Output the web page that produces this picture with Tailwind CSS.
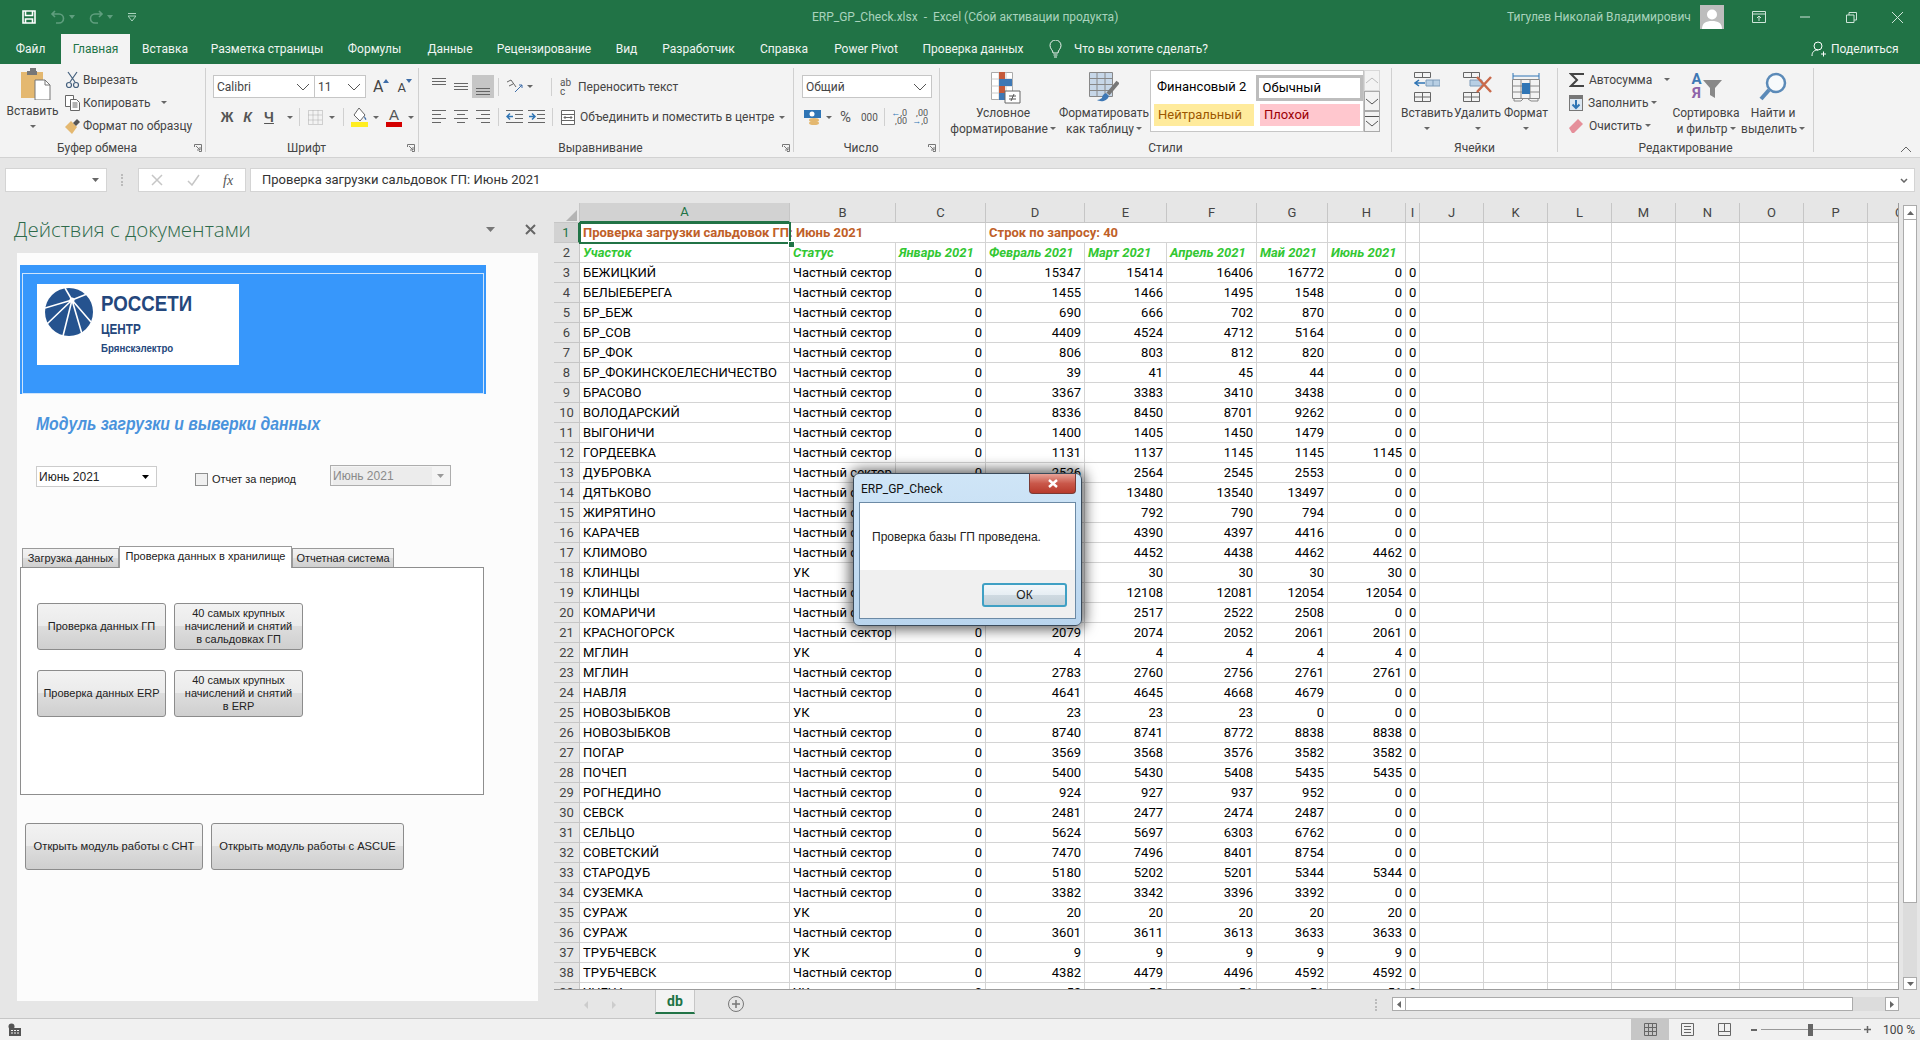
<!DOCTYPE html>
<html lang="ru">
<head>
  <meta charset="UTF-8" />
  <title>ERP_GP_Check.xlsx - Excel</title>
  <script src="https://cdn.jsdelivr.net/npm/@tailwindcss/browser@4"></script>
</head>

<body class="relative w-[1920px] h-[1040px] overflow-hidden bg-[#e6e6e6] text-[#444] font-['Roboto',sans-serif] text-[12px]">

  <!-- Title bar -->
  <header class="flex items-center h-[34px] bg-[#217346] text-[#a9d3bd]">
    <svg class="ml-[22px] w-[14px] h-[14px]" viewBox="0 0 14 14" fill="none" stroke="#fff" stroke-width="1.6"><path d="M1 1h12v12H1z"/><path d="M3.5 1v4.5h7V1M3.5 13V9h7v4"/></svg>
    <svg class="ml-[14px] w-[16px] h-[14px]" viewBox="0 0 16 14" fill="none" stroke="#5f9e7e" stroke-width="1.6"><path d="M5 1 2 4l3 3M2 4h7a4 4 0 0 1 0 9H6"/></svg>
    <svg class="ml-[3px] w-[6px] h-[4px]" viewBox="0 0 6 4" fill="#5f9e7e"><path d="M0 0h6L3 4z"/></svg>
    <svg class="ml-[13px] w-[16px] h-[14px]" viewBox="0 0 16 14" fill="none" stroke="#5f9e7e" stroke-width="1.6"><path d="m11 1 3 3-3 3M14 4H7a4 4 0 0 0 0 9h3"/></svg>
    <svg class="ml-[3px] w-[6px] h-[4px]" viewBox="0 0 6 4" fill="#5f9e7e"><path d="M0 0h6L3 4z"/></svg>
    <svg class="ml-[15px] w-[8px] h-[8px]" viewBox="0 0 8 8" fill="none" stroke="#a9d3bd"><path d="M0 .5h8"/><path d="M0 3h8L4 8z" fill="#217346"/></svg>
    <div class="ml-[676px] w-[295px] whitespace-pre">ERP_GP_Check.xlsx  -  Excel (Сбой активации продукта)</div>
    <div class="ml-[400px] w-[181px] text-right whitespace-nowrap">Тигулев Николай Владимирович</div>
    <div class="ml-[12px] w-[24px] h-[24px] bg-[#bdbdbd] flex items-end justify-center overflow-hidden">
      <svg class="w-[20px] h-[22px]" viewBox="0 0 20 22" fill="#fff"><circle cx="10" cy="7.5" r="5"/><path d="M0 22c0-6 4-8 10-8s10 2 10 8z"/></svg>
    </div>
    <svg class="ml-[28px] w-[14px] h-[12px]" viewBox="0 0 14 12" fill="none" stroke="#cfe5d9"><path d="M.5.500h13v11H.5zM.5 3h13M7 10V5M5 7l2-2 2 2"/></svg>
    <svg class="ml-[34px] w-[10px] h-[2px]" viewBox="0 0 10 2" fill="none" stroke="#cfe5d9"><path d="M0 1h10"/></svg>
    <svg class="ml-[36px] w-[11px] h-[11px]" viewBox="0 0 11 11" fill="none" stroke="#cfe5d9"><path d="M.5 3h7.500v7.500H.5zM3 3V.5h7.500V8H8"/></svg>
    <svg class="ml-[35px] w-[11px] h-[11px]" viewBox="0 0 11 11" fill="none" stroke="#cfe5d9"><path d="m0 0 11 11M11 0 0 11"/></svg>
  </header>

  <!-- Ribbon tabs -->
  <nav class="flex items-end h-[30px] bg-[#217346] text-[#f0f5f2] text-center whitespace-nowrap">
    <div class="w-[61px] h-[30px] leading-[30px]">Файл</div>
    <div class="w-[69px] h-[30px] leading-[30px] bg-[#f3f3f3] text-[#217346]">Главная</div>
    <div class="w-[70px] h-[30px] leading-[30px]">Вставка</div>
    <div class="w-[134px] h-[30px] leading-[30px]">Разметка страницы</div>
    <div class="w-[81px] h-[30px] leading-[30px]">Формулы</div>
    <div class="w-[70px] h-[30px] leading-[30px]">Данные</div>
    <div class="w-[118px] h-[30px] leading-[30px]">Рецензирование</div>
    <div class="w-[47px] h-[30px] leading-[30px]">Вид</div>
    <div class="w-[97px] h-[30px] leading-[30px]">Разработчик</div>
    <div class="w-[74px] h-[30px] leading-[30px]">Справка</div>
    <div class="w-[90px] h-[30px] leading-[30px]">Power Pivot</div>
    <div class="w-[124px] h-[30px] leading-[30px]">Проверка данных</div>
    <div class="flex items-center h-[30px] ml-[14px]">
      <svg class="w-[13px] h-[18px]" viewBox="0 0 13 18" fill="none" stroke="#f0f5f2"><path d="M4 13c0-3-3-4-3-7.500a5.500 5.500 0 0 1 11 0C12 9 9 10 9 13zM4.500 15h4M5 17h3"/></svg>
      <span class="ml-[12px] w-[737px] text-left">Что вы хотите сделать?</span>
      <svg class="w-[15px] h-[16px]" viewBox="0 0 15 16" fill="none" stroke="#fff"><circle cx="7" cy="5" r="4"/><path d="M1 15c0-4 2-6 6-6M10 13h5M12.500 10.500v5"/></svg>
      <span class="ml-[5px]">Поделиться</span>
    </div>
  </nav>

  <!-- Ribbon -->
  <section class="flex items-start h-[94px] pt-[4px] bg-[#f3f3f3] border-b border-[#d2d2d2] whitespace-nowrap">

    <!-- Буфер обмена -->
    <div class="shrink-0 w-[206px] h-[84px] border-r border-[#d0d0d0]">
      <div class="flex h-[72px]">
        <div class="w-[65px] flex flex-col items-center">
          <svg class="ml-[6px] w-[30px] h-[32px]" viewBox="0 0 30 32"><path d="M0 4h22v26H0z" fill="#e4b870"/><path d="M7 3h8v-3H9v3H6v4h10V3z" fill="#777"/><path d="M14 12h10l5 5v15H14z" fill="#fff" stroke="#777"/><path d="M24 12v5h5" fill="none" stroke="#777"/></svg>
          <span class="mt-[3px] leading-[16px]">Вставить</span>
          <svg class="mt-[6px] w-[6px] h-[3px]" viewBox="0 0 6 3" fill="#666"><path d="M0 0h6L3 3z"/></svg>
        </div>
        <div class="flex flex-col">
          <div class="flex items-center h-[23px]"><svg class="w-[15px] h-[18px]" viewBox="0 0 15 18" fill="none" stroke="#44607e" stroke-width="1.200"><path d="m3 1 7 10M12 1 5 11"/><circle cx="4" cy="14" r="2.500"/><circle cx="11" cy="14" r="2.500"/></svg><span class="ml-[3px]">Вырезать</span></div>
          <div class="flex items-center h-[23px]"><svg class="w-[15px] h-[16px]" viewBox="0 0 15 16" fill="#fff" stroke="#666"><path d="M.5.500h8v11h-8z"/><path d="M5.500 4.500h6l3 3v8h-9zM7.500 8h5M7.500 10h5M7.500 12h5"/></svg><span class="ml-[3px]">Копировать</span><svg class="ml-[11px] w-[6px] h-[3px]" viewBox="0 0 6 3" fill="#666"><path d="M0 0h6L3 3z"/></svg></div>
          <div class="flex items-center h-[23px]"><svg class="w-[15px] h-[16px]" viewBox="0 0 15 16"><path d="M0 9 6 3l6 6-5 7z" fill="#e4b870"/><path d="m8 5 4-4 3 3-4 4z" fill="#555"/></svg><span class="ml-[3px]">Формат по образцу</span></div>
        </div>
      </div>
      <div class="flex items-center h-[16px] text-[#444]">
        <span class="flex-1 text-center">Буфер обмена</span>
        <svg class="w-[8px] h-[8px] mr-[3px] shrink-0" viewBox="0 0 8 8" fill="none" stroke="#777"><path d="M.5 3V.5h7v7H5M2 2l4 4M6 3v3H3"/></svg>
      </div>
    </div>

    <!-- Шрифт -->
    <div class="shrink-0 w-[213px] h-[84px] border-r border-[#d0d0d0]">
      <div class="h-[72px] pl-[7px] pt-[7px]">
        <div class="flex items-center h-[23px]">
          <div class="flex items-center justify-between w-[102px] h-[23px] pl-[3px] pr-[4px] bg-white border border-[#c6c6c6]">Calibri<svg class="w-[14px] h-[8px]" viewBox="0 0 14 8" fill="none" stroke="#555"><path d="m1 1 6 6 6-6"/></svg></div>
          <div class="flex items-center justify-between w-[51px] h-[23px] pl-[3px] pr-[4px] bg-white border border-l-0 border-[#c6c6c6]">11<svg class="w-[14px] h-[8px]" viewBox="0 0 14 8" fill="none" stroke="#555"><path d="m1 1 6 6 6-6"/></svg></div>
          <span class="ml-[7px] text-[16px] leading-none">A</span><svg class="w-[6px] h-[4px] mb-[12px]" viewBox="0 0 6 4" fill="#3e6da8"><path d="M0 4h6L3 0z"/></svg>
          <span class="ml-[8px] text-[13px] leading-none mt-[2px]">A</span><svg class="w-[6px] h-[4px] mb-[12px]" viewBox="0 0 6 4" fill="#3e6da8"><path d="M0 0h6L3 4z"/></svg>
        </div>
        <div class="flex items-center h-[20px] mt-[9px] pl-[4px] font-['Liberation_Sans',sans-serif] font-bold text-[14px] text-[#555]">
          <span class="w-[20px] text-center">Ж</span>
          <span class="w-[21px] text-center italic">К</span>
          <span class="w-[22px] text-center underline">Ч</span>
          <svg class="ml-[7px] w-[6px] h-[3px]" viewBox="0 0 6 3" fill="#666"><path d="M0 0h6L3 3z"/></svg>
          <span class="ml-[6px] w-px h-[18px] bg-[#d0d0d0]"></span>
          <svg class="ml-[8px] w-[15px] h-[15px]" viewBox="0 0 15 15" fill="none" stroke="#aaa" stroke-dasharray="1 1"><path d="M.5.500h14v14H.5zM.5 5h14M.5 10h14M5 .5v14M10 .5v14"/></svg>
          <svg class="ml-[6px] w-[6px] h-[3px]" viewBox="0 0 6 3" fill="#666"><path d="M0 0h6L3 3z"/></svg>
          <span class="ml-[8px] w-px h-[18px] bg-[#d0d0d0]"></span>
          <svg class="ml-[7px] w-[17px] h-[20px]" viewBox="0 0 17 20"><path d="m8 1 6 7-5 6-6-6z" fill="#fff" stroke="#666"/><path d="M13 9c2 2 3 3 2 4-1 0-2-2-2-4z" fill="#3e6da8"/><path d="M0 15h17v5H0z" fill="#ffed20"/></svg>
          <svg class="ml-[5px] w-[6px] h-[3px]" viewBox="0 0 6 3" fill="#666"><path d="M0 0h6L3 3z"/></svg>
          <div class="ml-[7px] w-[16px] flex flex-col items-center"><span class="text-[15px] leading-[15px] font-normal text-[#555]">A</span><span class="w-[16px] h-[5px] bg-[#d40000]"></span></div>
          <svg class="ml-[6px] w-[6px] h-[3px]" viewBox="0 0 6 3" fill="#666"><path d="M0 0h6L3 3z"/></svg>
        </div>
      </div>
      <div class="flex items-center h-[16px]">
        <span class="flex-1 text-center">Шрифт</span>
        <svg class="w-[8px] h-[8px] mr-[3px] shrink-0" viewBox="0 0 8 8" fill="none" stroke="#777"><path d="M.5 3V.5h7v7H5M2 2l4 4M6 3v3H3"/></svg>
      </div>
    </div>

    <!-- Выравнивание -->
    <div class="shrink-0 w-[375px] h-[84px] border-r border-[#d0d0d0]">
      <div class="h-[72px] pt-[7px]">
        <div class="flex items-center h-[23px] pl-[9px]">
          <div class="w-[22px] h-[23px] flex justify-center pt-[3px]"><svg class="w-[14px] h-[8px]" viewBox="0 0 14 8" fill="none" stroke="#666"><path d="M0 .5h14M0 3.500h14M0 6.500h14"/></svg></div>
          <div class="w-[22px] h-[23px] flex justify-center pt-[8px]"><svg class="w-[14px] h-[8px]" viewBox="0 0 14 8" fill="none" stroke="#666"><path d="M0 .5h14M0 3.500h14M0 6.500h14"/></svg></div>
          <div class="w-[22px] h-[23px] flex justify-center pt-[13px] bg-[#c6c6c6]"><svg class="w-[14px] h-[8px]" viewBox="0 0 14 8" fill="none" stroke="#666"><path d="M0 .5h14M0 3.500h14M0 6.500h14"/></svg></div>
          <span class="ml-[4px] w-px h-[18px] bg-[#d0d0d0]"></span>
          <svg class="ml-[7px] w-[17px] h-[16px]" viewBox="0 0 17 16" fill="none" stroke="#666"><path d="m1 3 4-2 5 7M3 7l4-2"/><path d="M9 13 16 6M13 6h3v3" stroke="#3e6da8"/></svg>
          <svg class="ml-[4px] w-[6px] h-[3px]" viewBox="0 0 6 3" fill="#666"><path d="M0 0h6L3 3z"/></svg>
          <span class="ml-[18px] w-px h-[18px] bg-[#d0d0d0]"></span>
          <span class="ml-[8px] w-[13px] text-[10px] leading-[9px] text-[#555] whitespace-normal">ab c</span>
          <span class="ml-[5px]">Переносить текст</span>
        </div>
        <div class="flex items-center h-[20px] mt-[9px] pl-[9px]">
          <div class="w-[22px] flex justify-center"><svg class="w-[14px] h-[14px]" viewBox="0 0 14 14" fill="none" stroke="#666"><path d="M0 .5h14M0 4.500h9M0 8.500h14M0 12.500h9"/></svg></div>
          <div class="w-[22px] flex justify-center"><svg class="w-[14px] h-[14px]" viewBox="0 0 14 14" fill="none" stroke="#666"><path d="M0 .5h14M3 4.500h8M0 8.500h14M3 12.500h8"/></svg></div>
          <div class="w-[22px] flex justify-center"><svg class="w-[14px] h-[14px]" viewBox="0 0 14 14" fill="none" stroke="#666"><path d="M0 .5h14M5 4.500h9M0 8.500h14M5 12.500h9"/></svg></div>
          <span class="ml-[4px] w-px h-[18px] bg-[#d0d0d0]"></span>
          <svg class="ml-[7px] w-[17px] h-[14px]" viewBox="0 0 17 14" fill="none" stroke="#666"><path d="M0 .5h17M9 4.500h8M9 8.500h8M0 12.500h17"/><path d="M7 6.500H1M4 3.500l-3 3 3 3" stroke="#2f75b5" stroke-width="1.500"/></svg>
          <svg class="ml-[5px] w-[17px] h-[14px]" viewBox="0 0 17 14" fill="none" stroke="#666"><path d="M0 .5h17M9 4.500h8M9 8.500h8M0 12.500h17"/><path d="M1 6.500h6M4 3.500l3 3-3 3" stroke="#2f75b5" stroke-width="1.500"/></svg>
          <span class="ml-[7px] w-px h-[18px] bg-[#d0d0d0]"></span>
          <svg class="ml-[8px] w-[14px] h-[15px]" viewBox="0 0 14 15" fill="#fff" stroke="#666"><path d="M.5.500h13v14H.5zM.5 4.500h13M.5 10.500h13M3 7.500h8M3 7.500l1.500-1.500M3 7.500 4.500 9M11 7.500 9.500 6M11 7.500 9.500 9"/></svg>
          <span class="ml-[5px] w-[190px]">Объединить и поместить в центре</span>
          <svg class="ml-[9px] w-[6px] h-[3px]" viewBox="0 0 6 3" fill="#666"><path d="M0 0h6L3 3z"/></svg>
        </div>
      </div>
      <div class="flex items-center h-[16px]">
        <span class="flex-1 text-center">Выравнивание</span>
        <svg class="w-[8px] h-[8px] mr-[3px] shrink-0" viewBox="0 0 8 8" fill="none" stroke="#777"><path d="M.5 3V.5h7v7H5M2 2l4 4M6 3v3H3"/></svg>
      </div>
    </div>

    <!-- Число -->
    <div class="shrink-0 w-[146px] h-[84px] border-r border-[#d0d0d0]">
      <div class="h-[72px] pl-[8px] pt-[7px]">
        <div class="flex items-center justify-between w-[130px] h-[23px] pl-[3px] pr-[4px] bg-white border border-[#c6c6c6]">Общий<svg class="w-[14px] h-[8px]" viewBox="0 0 14 8" fill="none" stroke="#555"><path d="m1 1 6 6 6-6"/></svg></div>
        <div class="flex items-center h-[20px] mt-[9px] pl-[2px]">
          <svg class="w-[17px] h-[16px]" viewBox="0 0 17 16"><path d="M0 1h17v8H0z" fill="#2f75b5"/><circle cx="8" cy="5" r="2.500" fill="#fff"/><ellipse cx="10" cy="11" rx="5" ry="2" fill="#e4b870"/><ellipse cx="10" cy="14" rx="5" ry="2" fill="#e4b870"/></svg>
          <svg class="ml-[5px] w-[6px] h-[3px]" viewBox="0 0 6 3" fill="#666"><path d="M0 0h6L3 3z"/></svg>
          <span class="ml-[8px] w-[17px] text-[15px] text-[#555]">%</span>
          <span class="ml-[4px] w-[20px] text-[10px] text-[#555]">000</span>
          <span class="ml-[3px] w-px h-[18px] bg-[#d0d0d0]"></span>
          <div class="ml-[6px] w-[16px] text-[9px] leading-[8px] text-[#555] whitespace-normal text-right"><span class="text-[#2f75b5]">←</span>,0 ,00</div>
          <div class="ml-[5px] w-[16px] text-[9px] leading-[8px] text-[#555] whitespace-normal text-right">,00 <span class="text-[#2f75b5]">→</span>,0</div>
        </div>
      </div>
      <div class="flex items-center h-[16px]">
        <span class="flex-1 text-center">Число</span>
        <svg class="w-[8px] h-[8px] mr-[3px] shrink-0" viewBox="0 0 8 8" fill="none" stroke="#777"><path d="M.5 3V.5h7v7H5M2 2l4 4M6 3v3H3"/></svg>
      </div>
    </div>

    <!-- Стили -->
    <div class="shrink-0 w-[452px] h-[84px] border-r border-[#d0d0d0]">
      <div class="flex h-[72px] pl-[8px]">
        <div class="w-[110px] flex flex-col items-center">
          <svg class="ml-[5px] w-[30px] h-[32px] mt-[4px]" viewBox="0 0 30 32"><path d="M.5.500h21v27H.5z" fill="#fff" stroke="#aaa"/><path d="M.5 7h21M.5 14h21M.5 21h21M8 .5v27M15 .5v27" stroke="#ccc"/><path d="M8 0h6v7H8z" fill="#c55a3a"/><path d="M8 7h13v7H8z" fill="#3e78b5"/><path d="M8 14h6v7H8z" fill="#c55a3a"/><path d="M8 21h9v7H8z" fill="#3e78b5"/><path d="M14 19h15v12H14z" fill="#fff" stroke="#666"/><path d="M18 24h7M18 27h7M23 22l-3 7" stroke="#555" fill="none"/></svg>
          <span class="mt-[1px] leading-[16px]">Условное</span>
          <span class="leading-[16px]">форматирование<svg class="inline ml-[2px] mb-[2px] w-[6px] h-[3px]" viewBox="0 0 6 3" fill="#666"><path d="M0 0h6L3 3z"/></svg></span>
        </div>
        <div class="w-[92px] flex flex-col items-center">
          <svg class="mt-[4px] w-[30px] h-[32px]" viewBox="0 0 30 32"><path d="M.5.500h23v24H.5z" fill="#c7d7e8" stroke="#888"/><path d="M.5 6.500h23M.5 12.500h23M.5 18.500h23M8 .5v24M16 .5v24" stroke="#888"/><path d="M29 10 19 22" stroke="#777" stroke-width="4"/><path d="M17 21c-3 1-4 3-4 5-2 1-3 2-5 2 3 2 10 2 12-4z" fill="#3e78b5"/></svg>
          <span class="mt-[1px] leading-[16px]">Форматировать</span>
          <span class="leading-[16px]">как таблицу<svg class="inline ml-[2px] mb-[2px] w-[6px] h-[3px]" viewBox="0 0 6 3" fill="#666"><path d="M0 0h6L3 3z"/></svg></span>
        </div>
        <div class="mt-[2px] w-[214px] h-[62px] flex flex-col bg-white border border-[#c6c6c6] text-[13px] text-black">
          <div class="flex h-[30px] pt-[4px]">
            <div class="w-[105px] h-[26px] leading-[24px] pl-[6px]">Финансовый 2</div>
            <div class="w-[108px] h-[26px] leading-[20px] pl-[4px] border-[3px] border-[#bdbdbd]">Обычный</div>
          </div>
          <div class="flex h-[22px] mt-[3px] pl-[3px]">
            <div class="w-[100px] leading-[22px] pl-[4px] bg-[#ffeb9c] text-[#9c5700]">Нейтральный</div>
            <div class="ml-[6px] w-[100px] leading-[22px] pl-[4px] bg-[#ffc7ce] text-[#9c0006]">Плохой</div>
          </div>
        </div>
        <div class="mt-[2px] w-[16px] h-[62px] flex flex-col">
          <div class="h-[21px] flex items-center justify-center border border-[#d8d8d8] bg-[#f3f3f3]"><svg class="w-[12px] h-[7px]" viewBox="0 0 12 7" fill="none" stroke="#bbb"><path d="m0 6 6-5 6 5"/></svg></div>
          <div class="h-[20px] flex items-center justify-center border border-[#aaa]"><svg class="w-[12px] h-[7px]" viewBox="0 0 12 7" fill="none" stroke="#555"><path d="m0 1 6 5 6-5"/></svg></div>
          <div class="h-[21px] flex flex-col items-center justify-center gap-[3px] border border-[#aaa]"><span class="w-[14px] h-px bg-[#555]"></span><svg class="w-[12px] h-[7px]" viewBox="0 0 12 7" fill="none" stroke="#555"><path d="m0 1 6 5 6-5"/></svg></div>
        </div>
      </div>
      <div class="h-[16px] leading-[16px] text-center">Стили</div>
    </div>

    <!-- Ячейки -->
    <div class="shrink-0 w-[166px] h-[84px] border-r border-[#d0d0d0]">
      <div class="flex h-[72px] pl-[10px] text-center">
        <div class="w-[50px] flex flex-col items-center">
          <svg class="mt-[4px] w-[26px] h-[30px]" viewBox="0 0 26 30" fill="none" stroke="#666"><path d="M.5.500h16v5H.5zM8.500.5v5M.5 20.500h16v9H.5zM.5 25h16M8.500 20.500v9"/><path d="M12 8h14v6H12zM19 8v6" fill="#b8cfe4" stroke="#7c9bb8"/><path d="M11 11H1M5 8l-4 3 4 3" stroke="#2f75b5" stroke-width="1.500"/></svg>
          <span class="mt-[3px] leading-[16px]">Вставить</span>
          <svg class="mt-[6px] w-[6px] h-[3px]" viewBox="0 0 6 3" fill="#666"><path d="M0 0h6L3 3z"/></svg>
        </div>
        <div class="w-[51px] flex flex-col items-center">
          <svg class="mt-[4px] w-[30px] h-[30px]" viewBox="0 0 30 30" fill="none" stroke="#666"><path d="M.5.500h16v5H.5zM8.500.5v5M.5 20.500h16v9H.5zM.5 25h16M8.500 20.500v9"/><path d="M7 8h12v6H7z" fill="#b8cfe4" stroke="#7c9bb8"/><path d="m14 5 14 15M28 5 14 20" stroke="#c9694a" stroke-width="2.500"/></svg>
          <span class="mt-[3px] leading-[16px]">Удалить</span>
          <svg class="mt-[6px] w-[6px] h-[3px]" viewBox="0 0 6 3" fill="#666"><path d="M0 0h6L3 3z"/></svg>
        </div>
        <div class="w-[46px] flex flex-col items-center">
          <svg class="mt-[4px] w-[28px] h-[30px]" viewBox="0 0 28 30" fill="none" stroke="#888"><path d="M1 4h26M1 1v6M27 1v6" stroke="#2f75b5"/><path d="M.5 7.500h27v19H.5zM9 7.500v19M18 7.500v19M.5 14h27M.5 20h27"/><path d="M10 11h8v11h-8z" fill="#2f75b5" stroke="none"/><path d="M2 27v2h7l2-2M16 27l3 2h7v-2"/></svg>
          <span class="mt-[3px] leading-[16px]">Формат</span>
          <svg class="mt-[6px] w-[6px] h-[3px]" viewBox="0 0 6 3" fill="#666"><path d="M0 0h6L3 3z"/></svg>
        </div>
      </div>
      <div class="h-[16px] leading-[16px] text-center">Ячейки</div>
    </div>

    <!-- Редактирование -->
    <div class="shrink-0 w-[256px] h-[84px] border-r border-[#d0d0d0]">
      <div class="flex h-[72px] pl-[11px]">
        <div class="w-[102px] flex flex-col">
          <div class="flex items-center h-[23px]"><svg class="w-[16px] h-[16px]" viewBox="0 0 16 16" fill="none" stroke="#444" stroke-width="2"><path d="M15 2H2l6 6-6 6h13"/></svg><span class="ml-[4px]">Автосумма</span><svg class="ml-[12px] w-[6px] h-[3px]" viewBox="0 0 6 3" fill="#666"><path d="M0 0h6L3 3z"/></svg></div>
          <div class="flex items-center h-[23px]"><svg class="w-[14px] h-[16px]" viewBox="0 0 14 16"><path d="M0 0h14v16H0z" fill="#777"/><path d="M1 4h12v11H1z" fill="#dce7f2"/><path d="M7 5v8M3.500 9.500 7 13l3.500-3.500" fill="none" stroke="#2f75b5" stroke-width="2"/></svg><span class="ml-[5px]">Заполнить</span><svg class="ml-[3px] w-[6px] h-[3px]" viewBox="0 0 6 3" fill="#666"><path d="M0 0h6L3 3z"/></svg></div>
          <div class="flex items-center h-[23px]"><svg class="w-[14px] h-[14px]" viewBox="0 0 14 14"><path d="m0 9 9-9 5 5-9 9H3z" fill="#e58f9a"/></svg><span class="ml-[6px]">Очистить</span><svg class="ml-[3px] w-[6px] h-[3px]" viewBox="0 0 6 3" fill="#666"><path d="M0 0h6L3 3z"/></svg></div>
        </div>
        <div class="w-[70px] flex flex-col items-center text-center">
          <div class="flex items-start h-[30px] mt-[4px]">
            <div class="flex flex-col items-center w-[12px] font-bold text-[15px] leading-[14px]"><span class="text-[#3e78b5]">А</span><span class="text-[#8e63a8]">Я</span></div>
            <svg class="mt-[8px] w-[19px] h-[18px]" viewBox="0 0 19 18"><path d="M0 0h19l-7 8v10l-5-3V8z" fill="#888"/></svg>
          </div>
          <span class="mt-[3px] leading-[16px]">Сортировка</span>
          <span class="leading-[16px]">и фильтр<svg class="inline ml-[2px] mb-[2px] w-[6px] h-[3px]" viewBox="0 0 6 3" fill="#666"><path d="M0 0h6L3 3z"/></svg></span>
        </div>
        <div class="w-[64px] flex flex-col items-center text-center">
          <svg class="mt-[4px] w-[28px] h-[30px]" viewBox="0 0 28 30" fill="none"><circle cx="17" cy="11" r="9" stroke="#5b8ab8" stroke-width="2.500" fill="#f7fafc"/><path d="M10 18 2 27" stroke="#5b8ab8" stroke-width="4"/></svg>
          <span class="mt-[3px] leading-[16px]">Найти и</span>
          <span class="leading-[16px]">выделить<svg class="inline ml-[2px] mb-[2px] w-[6px] h-[3px]" viewBox="0 0 6 3" fill="#666"><path d="M0 0h6L3 3z"/></svg></span>
        </div>
      </div>
      <div class="h-[16px] leading-[16px] text-center">Редактирование</div>
    </div>

    <div class="flex-1 flex justify-end items-end h-[84px] pr-[8px]">
      <svg class="w-[12px] h-[6px]" viewBox="0 0 12 6" fill="none" stroke="#666"><path d="m1 6 5-5 5 5"/></svg>
    </div>
  </section>

  <!-- Formula bar -->
  <section class="flex items-start h-[45px] pt-[10px] pl-[5px] pr-[5px]">
    <div class="flex items-center justify-end w-[102px] h-[24px] pr-[7px] bg-white border border-[#d4d4d4]"><svg class="w-[7px] h-[4px]" viewBox="0 0 7 4" fill="#666"><path d="M0 0h7L3.500 4z"/></svg></div>
    <div class="ml-[14px] mt-[6px] w-[2px] h-[12px] border-l-2 border-dotted border-[#bbb]"></div>
    <div class="ml-[15px] flex items-center w-[108px] h-[24px] bg-white border border-[#d4d4d4]">
      <svg class="ml-[12px] w-[12px] h-[12px]" viewBox="0 0 12 12" fill="none" stroke="#c6c6c6" stroke-width="1.500"><path d="m1 1 10 10M11 1 1 11"/></svg>
      <svg class="ml-[24px] w-[13px] h-[12px]" viewBox="0 0 13 12" fill="none" stroke="#c6c6c6" stroke-width="1.500"><path d="m1 7 4 4 7-10"/></svg>
      <span class="ml-[23px] font-['Liberation_Serif',serif] italic text-[14px] text-[#555]">fx</span>
    </div>
    <div class="ml-[4px] flex items-center flex-1 h-[24px] pl-[11px] pr-[6px] bg-white border border-[#d4d4d4] text-[13px] text-[#333]">
      <span class="flex-1">Проверка загрузки сальдовок ГП: Июнь 2021</span>
      <svg class="w-[8px] h-[5px]" viewBox="0 0 8 5" fill="none" stroke="#666" stroke-width="1.500"><path d="m1 1 3 3 3-3"/></svg>
    </div>
  </section>

  <main class="flex h-[815px]">

    <!-- Task pane -->
    <aside class="w-[554px] shrink-0">
      <div class="flex items-center h-[50px] pl-[14px] pr-[14px] pt-[2px]">
        <h2 class="flex-1 font-['Open_Sans',sans-serif] font-light text-[20.500px] text-[#2d6a4a]">Действия с документами</h2>
        <svg class="w-[9px] h-[5px]" viewBox="0 0 9 5" fill="#777"><path d="M0 0h9L4.500 5z"/></svg>
        <svg class="ml-[30px] w-[11px] h-[11px] mr-[4px]" viewBox="0 0 11 11" fill="none" stroke="#666" stroke-width="2"><path d="m1 1 9 9M10 1l-9 9"/></svg>
      </div>

      <div class="ml-[17px] w-[521px] h-[748px] pt-[12px] bg-[#fcfcfc] font-['Liberation_Sans',sans-serif] text-[11px] text-[#222]">
        <div class="ml-[3px] w-[466px] h-[129px] pt-[8px] bg-[#3797fb]">
          <div class="ml-[2px] w-[462px] h-[121px] pt-[10px] pl-[14px] border border-[#cfe4fb]">
            <div class="flex w-[202px] h-[81px] bg-white">
              <svg class="ml-[8px] mt-[4px] w-[48px] h-[48px] shrink-0" viewBox="0 0 48 48"><circle cx="24" cy="24" r="24" fill="#25538f"/><path d="M27 12 18 48M27 12 37 46M27 12 0 20M27 12 2 36M27 12 46 34M27 12 20 0M27 12 42 6" stroke="#fff" stroke-width="1.600"/><circle cx="27" cy="12" r="2.500" fill="#fff"/></svg>
              <div class="ml-[8px] text-[#24477c] font-bold">
                <div class="mt-[7px] origin-left scale-x-[0.85] text-[22px] leading-[26px]">РОССЕТИ</div>
                <div class="mt-[3px] origin-left scale-x-[0.78] text-[15px] leading-[18px]">ЦЕНТР</div>
                <div class="mt-[3px] origin-left scale-x-[0.88] text-[11px] leading-[14px]">Брянскэлектро</div>
              </div>
            </div>
          </div>
        </div>

        <h1 class="ml-[19px] mt-[18px] h-[24px] leading-[24px] origin-left scale-x-[0.875] font-bold italic text-[18px] text-[#4a93dc]">Модуль загрузки и выверки данных</h1>

        <div class="flex items-start h-[21px] mt-[30px] ml-[19px]">
          <div class="flex items-center justify-between w-[121px] h-[21px] pl-[2px] pr-[7px] bg-white border border-[#ccc] text-[12px]">Июнь 2021<svg class="w-[7px] h-[4px]" viewBox="0 0 7 4" fill="#000"><path d="M0 0h7L3.500 4z"/></svg></div>
          <div class="flex items-center h-[14px] mt-[6px] ml-[38px]"><span class="w-[13px] h-[13px] bg-[#f0f0f0] border border-[#8e8f8f]"></span><span class="ml-[4px] text-[11px]">Отчет за период</span></div>
          <div class="flex items-center justify-between ml-[34px] -mt-[1px] w-[121px] h-[21px] pl-[2px] pr-[6px] bg-[#f4f4f4] border border-[#adadad] text-[12px] text-[#8a8a8a]"><span class="w-[99px] bg-[#ececec]">Июнь 2021</span><svg class="w-[7px] h-[4px]" viewBox="0 0 7 4" fill="#999"><path d="M0 0h7L3.500 4z"/></svg></div>
        </div>

        <!-- Tab control -->
        <div class="mt-[60px] ml-[3px] w-[464px]">
          <div class="flex items-end h-[20px] pl-[2px] text-[11px] whitespace-nowrap">
            <div class="w-[97px] h-[19px] leading-[18px] text-center border border-b-0 border-[#9a9a9a] bg-[linear-gradient(#f2f2f2,#ebebeb_49%,#dddddd_50%,#cfcfcf)]">Загрузка данных</div>
            <div class="relative z-10 -mb-px w-[173px] h-[22px] leading-[18px] text-center border border-b-0 border-[#9a9a9a] bg-white">Проверка данных в хранилище</div>
            <div class="w-[102px] h-[19px] leading-[18px] text-center border border-b-0 border-[#9a9a9a] bg-[linear-gradient(#f2f2f2,#ebebeb_49%,#dddddd_50%,#cfcfcf)]">Отчетная система</div>
          </div>
          <div class="h-[228px] pt-[35px] pl-[16px] bg-white border border-[#8e8e8e] text-center leading-[13px] text-[11px]">
            <div class="flex gap-[8px]">
              <div class="flex items-center justify-center w-[129px] h-[47px] rounded-[3px] border border-[#8c8c8c] bg-[linear-gradient(#f2f2f2,#ebebeb_49%,#dddddd_50%,#cfcfcf)]">Проверка данных ГП</div>
              <div class="flex items-center justify-center w-[129px] h-[47px] rounded-[3px] border border-[#8c8c8c] bg-[linear-gradient(#f2f2f2,#ebebeb_49%,#dddddd_50%,#cfcfcf)]">40 самых крупных<br />начислений и снятий<br />в сальдовках ГП</div>
            </div>
            <div class="flex gap-[8px] mt-[20px]">
              <div class="flex items-center justify-center w-[129px] h-[47px] rounded-[3px] border border-[#8c8c8c] bg-[linear-gradient(#f2f2f2,#ebebeb_49%,#dddddd_50%,#cfcfcf)]">Проверка данных ERP</div>
              <div class="flex items-center justify-center w-[129px] h-[47px] rounded-[3px] border border-[#8c8c8c] bg-[linear-gradient(#f2f2f2,#ebebeb_49%,#dddddd_50%,#cfcfcf)]">40 самых крупных<br />начислений и снятий<br />в ERP</div>
            </div>
          </div>
        </div>

        <div class="flex gap-[8px] mt-[28px] ml-[8px] text-[11.200px]">
          <div class="flex items-center justify-center w-[178px] h-[47px] rounded-[3px] border border-[#8c8c8c] bg-[linear-gradient(#f2f2f2,#ebebeb_49%,#dddddd_50%,#cfcfcf)]">Открыть модуль работы с СНТ</div>
          <div class="flex items-center justify-center w-[193px] h-[47px] rounded-[3px] border border-[#8c8c8c] bg-[linear-gradient(#f2f2f2,#ebebeb_49%,#dddddd_50%,#cfcfcf)]">Открыть модуль работы с ASCUE</div>
        </div>
      </div>
    </aside>

    <!-- Sheet -->
    <div class="flex-1 flex flex-col min-w-0">
      <div class="flex h-[787px]">
        <div class="relative w-[1345px] shrink-0 h-[787px] overflow-hidden bg-white border-r border-b border-[#9c9c9c]">
          <table class="table-fixed w-[1378px] border-separate border-spacing-0 text-[13px] text-black leading-[18px]">
            <colgroup>
              <col class="w-[26px]" /><col class="w-[210px]" /><col class="w-[106px]" /><col class="w-[90px]" /><col class="w-[99px]" /><col class="w-[82px]" /><col class="w-[90px]" /><col class="w-[71px]" /><col class="w-[78px]" /><col class="w-[14px]" /><col class="w-[64px]" /><col class="w-[64px]" /><col class="w-[64px]" /><col class="w-[64px]" /><col class="w-[64px]" /><col class="w-[64px]" /><col class="w-[64px]" /><col class="w-[64px]" />
            </colgroup>
            <thead id="sheet-head" class="text-center text-[#444]"></thead>
            <tbody id="sheet-body"></tbody>
          </table>
          <!-- Active cell -->
          <div class="absolute left-[25px] top-[19px] w-[212px] h-[22px] border-2 border-[#217346]"></div>
          <div class="absolute left-[234px] top-[38px] w-[5px] h-[5px] bg-[#217346] border border-white box-content"></div>
        </div>
        <!-- Vertical scrollbar -->
        <div class="w-[21px] h-[787px] pl-[4px] pr-[3px] pt-[2px] bg-[#e6e6e6]">
          <div class="flex items-center justify-center h-[15px] bg-white border border-[#ababab]"><svg class="w-[7px] h-[4px]" viewBox="0 0 7 4" fill="#666"><path d="M0 4h7L3.500 0z"/></svg></div>
          <div class="h-[757px] bg-[#dcdcdc]">
            <div class="h-[683px] bg-white border border-[#ababab] border-t-0"></div>
          </div>
          <div class="flex items-center justify-center h-[13px] bg-white border border-[#ababab]"><svg class="w-[7px] h-[4px]" viewBox="0 0 7 4" fill="#666"><path d="M0 0h7L3.500 4z"/></svg></div>
        </div>
      </div>

      <!-- Sheet tabs + horizontal scrollbar -->
      <div class="flex items-start h-[28px]">
        <svg class="ml-[30px] mt-[11px] w-[4px] h-[8px]" viewBox="0 0 4 8" fill="#ccc"><path d="M4 0v8L0 4z"/></svg>
        <svg class="ml-[24px] mt-[11px] w-[4px] h-[8px]" viewBox="0 0 4 8" fill="#ccc"><path d="M0 0v8l4-4z"/></svg>
        <div class="ml-[39px] w-[40px] h-[25px] -mt-px bg-[#f3f3f3] border-x border-[#c6c6c6] border-b-[2px] border-b-[#217346] text-center font-bold text-[14px] leading-[24px] text-[#217346]">db</div>
        <svg class="ml-[33px] mt-[6px] w-[16px] h-[16px]" viewBox="0 0 16 16" fill="none" stroke="#777"><circle cx="8" cy="8" r="7.500"/><path d="M8 4v8M4 8h8" stroke-width="1.500"/></svg>
        <div class="ml-[631px] mt-[9px] w-[2px] h-[12px] border-l-2 border-dotted border-[#bbb]"></div>
        <div class="ml-[15px] mt-[7px] flex w-[507px] h-[14px] bg-[#dcdcdc]">
          <div class="flex items-center justify-center w-[14px] bg-white border border-[#ababab]"><svg class="w-[4px] h-[7px]" viewBox="0 0 4 7" fill="#666"><path d="M4 0v7L0 3.500z"/></svg></div>
          <div class="w-[447px] bg-white border-y border-r border-[#ababab]"></div>
          <div class="ml-[32px] flex items-center justify-center w-[14px] bg-white border border-[#ababab]"><svg class="w-[4px] h-[7px]" viewBox="0 0 4 7" fill="#666"><path d="M0 0v7l4-3.500z"/></svg></div>
        </div>
      </div>
    </div>
  </main>

  <!-- Status bar -->
  <footer class="flex items-center h-[22px] bg-[#f1f1f1] border-t border-[#c6c6c6] text-[#444]">
    <svg class="ml-[8px] w-[13px] h-[13px]" viewBox="0 0 13 13"><circle cx="3.500" cy="3.500" r="3" fill="#555"/><path d="M1 5h12v8H1z" fill="#555"/><path d="M3 7h2v1H3zM6 7h2v1H6zM9 7h2v1H9zM3 9.500h2v1H3zM6 9.500h2v1H6zM9 9.500h2v1H9z" fill="#f1f1f1"/></svg>
    <div class="ml-[1610px] flex items-center justify-center w-[38px] h-[22px] bg-[#c6c6c6]"><svg class="w-[13px] h-[13px]" viewBox="0 0 13 13" fill="none" stroke="#666"><path d="M.5.500h12v12H.5zM.5 4.500h12M.5 8.500h12M4.500.5v12M8.500.5v12"/></svg></div>
    <svg class="ml-[12px] w-[13px] h-[13px]" viewBox="0 0 13 13" fill="none" stroke="#666"><path d="M.5.500h12v12H.5zM3 3.500h7M3 6.500h7M3 9.500h7"/></svg>
    <svg class="ml-[24px] w-[13px] h-[13px]" viewBox="0 0 13 13" fill="none" stroke="#666"><path d="M.5.500h12v12H.5zM.5 8.500h12M6.500.5v8"/></svg>
    <span class="ml-[20px] w-[6px] h-[2px] bg-[#666]"></span>
    <div class="ml-[4px] relative flex items-center w-[100px] h-[14px]">
      <span class="w-full h-px bg-[#999]"></span>
      <span class="absolute left-[47px] w-[5px] h-[12px] bg-[#666]"></span>
    </div>
    <svg class="ml-[3px] w-[7px] h-[7px]" viewBox="0 0 7 7" fill="none" stroke="#666" stroke-width="1.500"><path d="M3.500 0v7M0 3.500h7"/></svg>
    <span class="ml-[12px] whitespace-nowrap">100 %</span>
  </footer>

  <!-- Message box -->
  <div class="absolute left-[853px] top-[473px] w-[229px] h-[153px] rounded-[6px] border border-[#3a4a5a] bg-[linear-gradient(#cfe5f7,#b9d5ee)] shadow-[0_0_14px_3px_rgba(0,0,0,0.65)] font-['Liberation_Sans',sans-serif]">
    <div class="flex h-[28px]">
      <span class="ml-[7px] mt-[6px] font-['Roboto',sans-serif] text-[12px] text-[#111]">ERP_GP_Check</span>
      <div class="ml-auto mr-[5px] flex items-center justify-center w-[47px] h-[20px] rounded-b-[4px] border border-[#7a3a34] border-t-0 bg-[linear-gradient(#e9a297,#c9584a_50%,#b83a2c)]">
        <svg class="w-[10px] h-[9px]" viewBox="0 0 10 9" fill="none" stroke="#fff" stroke-width="2.400"><path d="m1 1 8 7M9 1 1 8"/></svg>
      </div>
    </div>
    <div class="mx-[5px] h-[117px] bg-white border border-[#6c8aa5] flex flex-col">
      <div class="h-[67px] pl-[12px] pt-[27px] text-[12px] text-[#222] leading-[14px]">Проверка базы ГП проведена.</div>
      <div class="flex-1 flex justify-end pr-[8px] pt-[13px] bg-[#f0f0f0]">
        <div class="flex items-center justify-center w-[85px] h-[24px] rounded-[3px] border-2 border-[#3fa0c4] bg-[linear-gradient(#f2f7fa,#e6eef3_49%,#cfdae1_50%,#c2d0d8)] text-[12px] text-[#222]">ОК</div>
      </div>
    </div>
  </div>

  <script>
    const cols = ['A','B','C','D','E','F','G','H','I','J','K','L','M','N','O','P','Q'];
    const chs = 'Частный сектор';
    // district, status, D..H values (C and I are always 0)
    const rows = [
      ['БЕЖИЦКИЙ',chs,15347,15414,16406,16772,0],['БЕЛЫЕБЕРЕГА',chs,1455,1466,1495,1548,0],['БР_БЕЖ',chs,690,666,702,870,0],
      ['БР_СОВ',chs,4409,4524,4712,5164,0],['БР_ФОК',chs,806,803,812,820,0],['БР_ФОКИНСКОЕЛЕСНИЧЕСТВО',chs,39,41,45,44,0],
      ['БРАСОВО',chs,3367,3383,3410,3438,0],['ВОЛОДАРСКИЙ',chs,8336,8450,8701,9262,0],['ВЫГОНИЧИ',chs,1400,1405,1450,1479,0],
      ['ГОРДЕЕВКА',chs,1131,1137,1145,1145,1145],['ДУБРОВКА',chs,2526,2564,2545,2553,0],['ДЯТЬКОВО',chs,13410,13480,13540,13497,0],
      ['ЖИРЯТИНО',chs,788,792,790,794,0],['КАРАЧЕВ',chs,4372,4390,4397,4416,0],['КЛИМОВО',chs,4440,4452,4438,4462,4462],
      ['КЛИНЦЫ','УК',30,30,30,30,30],['КЛИНЦЫ',chs,12090,12108,12081,12054,12054],['КОМАРИЧИ',chs,2510,2517,2522,2508,0],
      ['КРАСНОГОРСК',chs,2079,2074,2052,2061,2061],['МГЛИН','УК',4,4,4,4,4],['МГЛИН',chs,2783,2760,2756,2761,2761],
      ['НАВЛЯ',chs,4641,4645,4668,4679,0],['НОВОЗЫБКОВ','УК',23,23,23,0,0],['НОВОЗЫБКОВ',chs,8740,8741,8772,8838,8838],
      ['ПОГАР',chs,3569,3568,3576,3582,3582],['ПОЧЕП',chs,5400,5430,5408,5435,5435],['РОГНЕДИНО',chs,924,927,937,952,0],
      ['СЕВСК',chs,2481,2477,2474,2487,0],['СЕЛЬЦО',chs,5624,5697,6303,6762,0],['СОВЕТСКИЙ',chs,7470,7496,8401,8754,0],
      ['СТАРОДУБ',chs,5180,5202,5201,5344,5344],['СУЗЕМКА',chs,3382,3342,3396,3392,0],['СУРАЖ','УК',20,20,20,20,20],
      ['СУРАЖ',chs,3601,3611,3613,3633,3633],['ТРУБЧЕВСК','УК',9,9,9,9,9],['ТРУБЧЕВСК',chs,4382,4479,4496,4592,4592],
      ['УНЕЧА','УК',52,52,51,51,51]
    ];

    const hd = 'h-[20px] p-0 font-normal border-r border-b border-[#c6c6c6] bg-[#e6e6e6]';
    const hdOn = 'h-[20px] p-0 font-normal border-r border-b-2 border-b-[#217346] border-r-[#c6c6c6] bg-[#d2d2d2] text-[#217346]';
    const rowNum = 'h-[20px] p-0 text-center text-[#444] border-r border-b border-[#c6c6c6] bg-[#e6e6e6]';
    const rowNumOn = 'h-[20px] p-0 text-center text-[#217346] border-r-2 border-b border-r-[#217346] border-b-[#c6c6c6] bg-[#d2d2d2]';
    const txt = 'h-[20px] px-[3px] overflow-visible whitespace-nowrap border-r border-b border-[#d4d4d4]';
    const num = 'h-[20px] px-[3px] text-right whitespace-nowrap border-r border-b border-[#d4d4d4]';
    const open = 'h-[20px] px-[3px] whitespace-nowrap border-b border-[#d4d4d4]';
    const title = 'h-[20px] px-[3px] whitespace-nowrap border-b border-[#d4d4d4] font-bold text-[#bf6028]';
    const green = 'h-[20px] px-[3px] whitespace-nowrap border-r border-b border-[#d4d4d4] font-bold italic text-[#33c733]';
    const td = (cls, v = '') => `<td class="${cls}">${v}</td>`;
    const blanks = n => td(txt).repeat(n);

    document.getElementById('sheet-head').innerHTML = '<tr>'
      + `<th class="${hd}"><svg class="ml-[12px] mt-[5px] w-[11px] h-[11px]" viewBox="0 0 11 11" fill="#b4b4b4"><path d="M11 0v11H0z"/></svg></th>`
      + cols.map((c, i) => `<th class="${i === 0 ? hdOn : hd}">${c}</th>`).join('') + '</tr>';

    let html = '<tr>' + td(rowNumOn, 1)
      + td(title, 'Проверка загрузки сальдовок ГП: Июнь 2021') + td(open) + td(txt)
      + td(title, 'Строк по запросу: 40') + td(open) + td(txt) + td(txt) + td(txt) + td(txt) + blanks(8) + '</tr>';
    html += '<tr>' + td(rowNum, 2)
      + ['Участок','Статус'].map(v => td(green, v)).join('')
      + ['Январь 2021','Февраль 2021','Март 2021','Апрель 2021','Май 2021','Июнь 2021'].map(v => td(green, v)).join('')
      + td(txt) + blanks(8) + '</tr>';
    rows.forEach((r, i) => {
      html += '<tr>' + td(rowNum, i + 3) + td(txt, r[0]) + td(txt, r[1]) + td(num, 0)
        + r.slice(2).map(v => td(num, v)).join('') + td(num, 0) + blanks(8) + '</tr>';
    });
    document.getElementById('sheet-body').innerHTML = html;
  </script>
</body>
</html>
